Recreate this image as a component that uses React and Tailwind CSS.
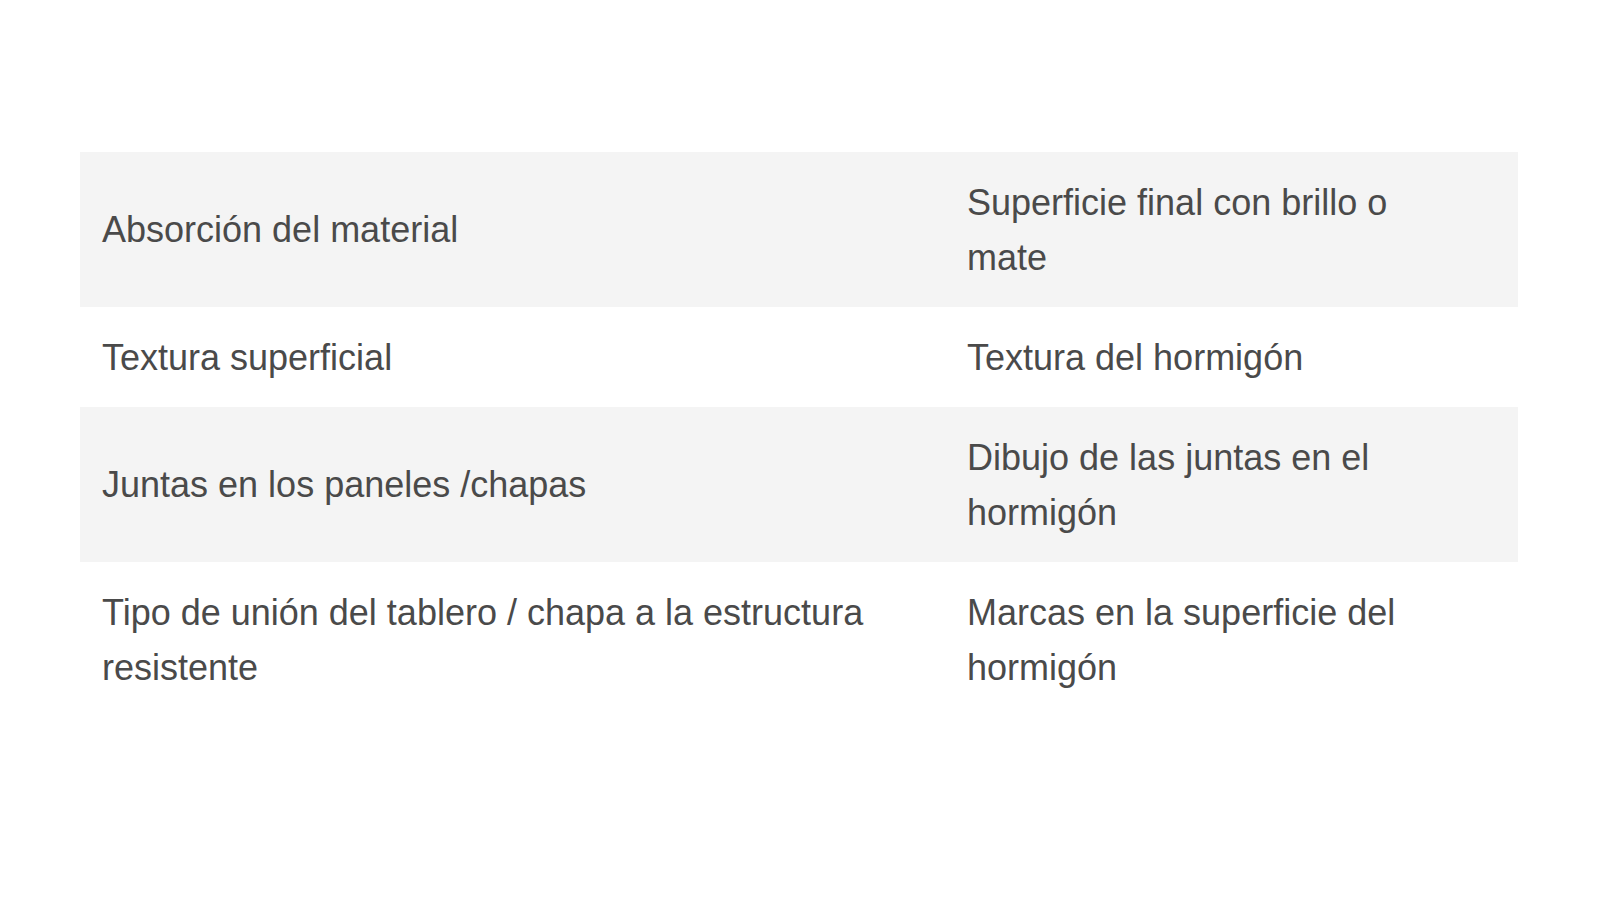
import React from "react";

const rows = [
  { left: "Absorción del material", right: "Superficie final con brillo o mate", shaded: true },
  { left: "Textura superficial", right: "Textura del hormigón", shaded: false },
  { left: "Juntas en los paneles /chapas", right: "Dibujo de las juntas en el hormigón", shaded: true },
  { left: "Tipo de unión del tablero / chapa a la estructura resistente", right: "Marcas en la superficie del hormigón", shaded: false },
];

const App = () => {
  return (
    <div
      className="w-[1600px] h-[901px] bg-white pt-[152px] pl-[80px]"
      style={{ fontFamily: '"Liberation Sans", Arial, sans-serif' }}
    >
      <table className="w-[1438px] border-collapse text-[36px] leading-[55px] text-[#4a4a4a]">
        <tbody>
          {rows.map((row) => (
            <tr key={row.left} className={row.shaded ? "bg-[#f4f4f4]" : "bg-white"}>
              <td className="w-[865px] pl-[22px] pr-[22px] py-[22.5px] align-middle">{row.left}</td>
              <td className="pl-[22px] pr-[88px] py-[22.5px] align-middle">{row.right}</td>
            </tr>
          ))}
        </tbody>
      </table>
    </div>
  );
};

export default App;
